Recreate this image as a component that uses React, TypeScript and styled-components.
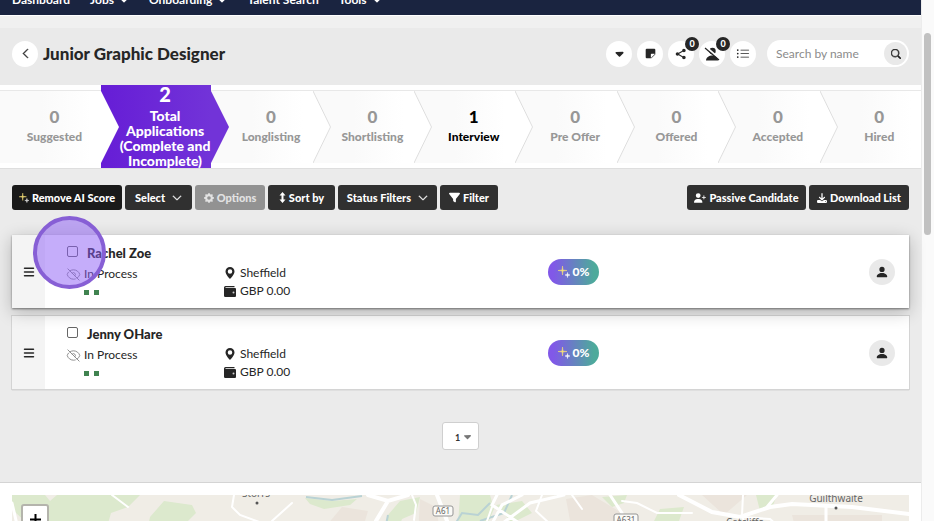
import React from "react";
import styled, { createGlobalStyle, css } from "styled-components";
import {
  BsStickyFill,
  BsListUl,
  BsSearch,
  BsChevronLeft,
  BsChevronDown,
  BsPersonFill,
  BsGeoAltFill,
  BsGearFill,
} from "react-icons/bs";
import { BiSolidShareAlt } from "react-icons/bi";
import { FaBars, FaCaretDown, FaDownload, FaFilter, FaUserPlus } from "react-icons/fa6";
import { HiOutlineEyeSlash } from "react-icons/hi2";

const GlobalStyle = createGlobalStyle`
  * { box-sizing: border-box; }
  body {
    margin: 0;
    background: #ebebeb;
    color: #262626;
    font-family: Lato, "Liberation Sans", sans-serif;
    font-size: 12px;
  }
  button, input, select { font: inherit; color: inherit; }
  svg { display: block; flex: none; }
`;

const Shell = styled.div`
  display: flex;
  height: 100vh;
  overflow: hidden;
`;

const Page = styled.main`
  flex: 1;
  min-width: 0;
`;

const ScrollTrack = styled.div`
  width: 13px;
  background: #fafafa;
  border-left: 1px solid #ececec;
  padding: 33px 3px 0 2px;
`;

const ScrollThumb = styled.div`
  height: 202px;
  border-radius: 4px;
  background: #c1c1c1;
`;

const Nav = styled.nav`
  display: flex;
  align-items: flex-end;
  gap: 20px;
  height: 15px;
  padding: 0 12px 7px;
  overflow: hidden;
  background: #1a2440;
`;

const NavLink = styled.a`
  display: flex;
  align-items: center;
  gap: 5px;
  color: #fff;
  font-size: 12px;
  font-weight: 700;
  line-height: 16px;
  text-decoration: none;
`;

const NavGap = styled.div`
  height: 13px;
  border-top: 1px solid #fff;
  background: #f0f0f0;
`;

const Header = styled.header`
  display: flex;
  align-items: center;
  gap: 5px;
  height: 57px;
  padding: 0 12px 6px;
  background: #eaeaea;
`;

const RoundButton = styled.button<{ $tone?: "grey" }>`
  position: relative;
  display: grid;
  place-items: center;
  width: 26px;
  height: 26px;
  flex: none;
  padding: 0;
  border: 0;
  border-radius: 50%;
  background: ${(p) => (p.$tone === "grey" ? "#e9e9e9" : "#fff")};
`;

const Title = styled.h1`
  margin: 0;
  flex: 1;
  font-size: 17px;
  font-weight: 900;
  line-height: 24px;
`;

const HeaderTools = styled.div`
  display: flex;
  gap: 5px;
  padding-right: 6px;
`;

const CountBadge = styled.span`
  position: absolute;
  top: -4px;
  left: 17px;
  width: 14px;
  height: 14px;
  border-radius: 50%;
  background: #262626;
  color: #fff;
  font-size: 9px;
  font-weight: 900;
  line-height: 14px;
  text-align: center;
`;

const SearchBox = styled.form`
  display: flex;
  align-items: center;
  width: 142px;
  height: 27px;
  padding: 0 2px 0 9px;
  border-radius: 14px;
  background: #fff;
`;

const SearchInput = styled.input`
  flex: 1;
  min-width: 0;
  padding: 0;
  border: 0;
  outline: 0;
  background: none;
  font-size: 12px;
  &::placeholder { color: #8b8b8b; opacity: 1; }
`;

const SearchButton = styled(RoundButton)`
  width: 23px;
  height: 23px;
`;

const Stages = styled.div`
  display: grid;
  grid-template-columns: 202fr 221fr repeat(7, 203fr);
  height: 83px;
  background: #fff;
`;

const Stage = styled.button<{ $tone: "muted" | "strong" | "active" }>`
  display: flex;
  min-width: 0;
  padding: 0;
  border: 0;
  text-align: center;
  color: #979797;
  background: linear-gradient(#fff 5px, #e8e8e8 5px, #e8e8e8 6px, transparent 6px, transparent 78px, #fff 78px),
    linear-gradient(90deg, #fafafa, #fafafa 40%, #fff 90%);
  ${(p) => p.$tone === "strong" && css`color: #000;`}
  ${(p) =>
    p.$tone === "active" &&
    css`
      color: #fff;
      background: linear-gradient(90deg, #661dd6, #7233d8);
    `}
`;

const StageText = styled.span<{ $active: boolean }>`
  display: flex;
  flex: 1;
  min-width: 0;
  flex-direction: column;
  gap: ${(p) => (p.$active ? "5px" : "3px")};
  padding-top: ${(p) => (p.$active ? "0" : "23px")};
`;

const StageCount = styled.span<{ $active: boolean }>`
  font-size: ${(p) => (p.$active ? "20px" : "17px")};
  font-weight: 900;
  line-height: 18px;
`;

const StageLabel = styled.span<{ $active: boolean }>`
  font-size: ${(p) => (p.$active ? "14px" : "12px")};
  font-weight: 900;
  line-height: 15px;
`;

const StageInset = styled.span`
  width: 8px;
`;

const Listing = styled.section`
  padding: 16px 12px 32px;
  border-top: 1px solid #dedede;
  background: #ebebeb;
`;

const Toolbar = styled.div`
  display: flex;
  gap: 3px;
  margin-bottom: 25px;
`;

const ToolButton = styled.button<{ $width: number; $tone?: "dark" | "off" }>`
  display: flex;
  align-items: center;
  justify-content: center;
  gap: 3px;
  width: ${(p) => p.$width}px;
  height: 25px;
  padding: 0;
  border: 0;
  border-radius: 3px;
  background: ${(p) =>
    p.$tone === "dark" ? "#1a1a1a" : p.$tone === "off" ? "#929292" : "#303030"};
  color: ${(p) => (p.$tone === "off" ? "#e2e2e2" : "#fff")};
  font-size: 11px;
  font-weight: 900;
  line-height: 14px;
  white-space: nowrap;
`;

const MenuLabel = styled.span`
  margin-right: 4px;
`;

const Spacer = styled.div`
  flex: 1;
`;

const Cards = styled.ul`
  display: flex;
  flex-direction: column;
  gap: 8px;
  margin: 0;
  padding: 0;
  list-style: none;
`;

const Card = styled.li<{ $raised: boolean }>`
  position: relative;
  z-index: ${(p) => (p.$raised ? 1 : 0)};
  display: grid;
  grid-template-columns: 33px 179fr 324fr 321fr 26px;
  align-items: center;
  height: 73px;
  padding-right: 14px;
  background: #fff;
  box-shadow: ${(p) =>
    p.$raised
      ? "0 1px 2px rgba(0,0,0,.45), 0 4px 16px rgba(0,0,0,.24)"
      : "0 0 0 1px #d4d4d4, 0 1px 1px rgba(0,0,0,.3)"};
`;

const Handle = styled.button`
  display: grid;
  place-items: center;
  align-self: stretch;
  padding: 0;
  border: 0;
  background: #f4f4f4;
`;

const Person = styled.div`
  display: grid;
  grid-template-columns: 14px 1fr;
  column-gap: 4px;
  align-items: center;
  padding-left: 21px;
`;

const Tick = styled.input`
  appearance: none;
  width: 11px;
  height: 11px;
  margin: 0 0 3px 1px;
  border: 1px solid #666;
  border-radius: 2px;
  background: #fff;
`;

const Name = styled.label`
  padding-left: 3px;
  font-size: 13px;
  font-weight: 900;
  line-height: 22px;
`;

const Status = styled.span`
  line-height: 20px;
`;

const Dots = styled.div`
  grid-column: 2;
  display: flex;
  gap: 5px;
  padding: 6px 0 6px;
`;

const Dot = styled.span`
  width: 5px;
  height: 5px;
  background: #408350;
`;

const Facts = styled.div`
  display: grid;
  grid-template-columns: 12px 1fr;
  column-gap: 4px;
  align-items: center;
  justify-items: center;
  padding-top: 21px;
  line-height: 18px;
  & > span { justify-self: start; }
`;

const Score = styled.span`
  display: flex;
  align-items: center;
  justify-content: center;
  gap: 3px;
  width: 51px;
  height: 26px;
  border-radius: 13px;
  background: linear-gradient(90deg, #8158e8 10%, #4daa9b 90%);
  color: #fff;
  font-size: 12px;
  font-weight: 900;
`;

const ClickMarker = styled.div`
  position: absolute;
  top: -19px;
  left: 21px;
  width: 73px;
  height: 73px;
  border: 4px solid #875fd5;
  border-radius: 50%;
  background: rgba(139, 92, 246, 0.5);
  pointer-events: none;
`;

const Pager = styled.div`
  display: flex;
  justify-content: center;
  padding-top: 33px;
`;

const PageSelectBox = styled.div`
  display: flex;
  align-items: center;
  width: 37px;
  height: 28px;
  padding-right: 5px;
  border: 1px solid #cfcfcf;
  border-radius: 3px;
  background: #fff;
  color: #777;
`;

const PageSelect = styled.select`
  appearance: none;
  flex: 1;
  min-width: 0;
  padding: 2px 0 0 12px;
  border: 0;
  background: none;
  color: #333;
  font-size: 9px;
  font-weight: 700;
`;

const MapSection = styled.section`
  padding: 12px 12px 0;
  border-top: 1px solid #d4d4d4;
  background: #fff;
`;

const MapFrame = styled.div`
  position: relative;
  height: 60px;
  overflow: hidden;
`;

const ZoomIn = styled.button`
  position: absolute;
  top: 9px;
  left: 9px;
  display: grid;
  place-items: center;
  width: 28px;
  height: 31px;
  padding: 0;
  border: 2px solid #b4b4ac;
  border-radius: 3px;
  background: #fff;
`;

function Sparkles({ size }: { size: number }) {
  return (
    <svg width={size} height={size} viewBox="0 0 24 24" aria-hidden="true">
      <path d="M9 0L10 8L18 9L10 10L9 18L8 10L0 9L8 8Z" fill="#f5df78" stroke="#f5df78" strokeWidth="1" />
      <path d="M19 13L19.800 17.200L24 18L19.800 18.800L19 23L18.200 18.800L14 18L18.200 17.200Z" fill="#fff" stroke="#fff" strokeWidth="1" />
    </svg>
  );
}

function SortArrow() {
  return (
    <svg width="7" height="11" viewBox="0 0 7 11" aria-hidden="true">
      <path d="M3.500 0L6.500 3.500H4.500V7.500H6.500L3.500 11L0.500 7.500H2.500V3.500H0.500Z" fill="#fff" />
    </svg>
  );
}

function PersonSlash() {
  return (
    <svg width="16" height="14" viewBox="0 0 16 14" aria-hidden="true">
      <circle cx="8.500" cy="4" r="3.200" fill="#262626" />
      <path d="M2 13.500C2 10.500 5 8.500 8.500 8.500S14 10.500 14 13.500Z" fill="#262626" />
      <path d="M2 0L16 12" stroke="#fff" strokeWidth="2" />
      <path d="M1 1L15 13" stroke="#262626" strokeWidth="1.200" />
    </svg>
  );
}

function Wallet() {
  return (
    <svg width="12" height="11" viewBox="0 0 12 11" aria-hidden="true">
      <path d="M1.500 0H10.500V1.200H1.500V2H11A1 1 0 0 1 12 3V10A1 1 0 0 1 11 11H1.200A1.200 1.200 0 0 1 0 9.800V1.500A1.500 1.500 0 0 1 1.500 0Z" fill="#262626" />
      <circle cx="9.500" cy="6.500" r="1" fill="#cfcfcf" />
    </svg>
  );
}

function Chevron({ edge }: { edge: "line" | "notch" | "tip" }) {
  return (
    <svg width="18" height="83" viewBox="0 0 18 83" aria-hidden="true">
      <path d="M0 0V83V78L18 42L0 6Z" fill={edge === "tip" ? "#7233d8" : "#fff"} />
      {edge === "line" && <path d="M0 6L17.500 42L0 78" fill="none" stroke="#dedede" />}
    </svg>
  );
}

function AreaMap() {
  return (
    <svg width="100%" height="60" viewBox="0 0 897 60" preserveAspectRatio="xMidYMin slice" aria-hidden="true">
      <rect width="897" height="60" fill="#f0ede6" />
      <g fill="#dce9cd">
        <path d="M0 0H33L38 6L45 0H128L116 12L99 18L95 32L104 60H48L0 14Z" />
        <path d="M152 6L180 10L184 18L174 28L160 60H130L138 22Z" />
        <path d="M293 3L320 6L345 4L338 10L312 14L298 9ZM388 6L408 2L404 18L390 24L376 60H366L376 20Z" />
        <path d="M448 0H478L482 14L462 60H444ZM484 10L510 6L520 18L500 28ZM590 2L615 0L612 8L600 12ZM744 0H765L760 13L748 16ZM648 14L672 12L667 26H642Z" />
      </g>
      <g fill="#ebe4dc">
        <path d="M330 12L356 16L350 36H310ZM554 4L580 0L610 18L600 36H560ZM690 0H735L712 20ZM780 20H870V60H790ZM408 4L424 12L432 60H405Z" />
      </g>
      <g fill="none" stroke="#b9d2d4" strokeWidth="2">
        <path d="M294 2L320 5L350 1M376 20L368 60M424 60L450 18L466 20L478 8M500 0L492 18L468 26M543 2L552 0" />
      </g>
      <g fill="none" stroke="#fff" strokeLinecap="round">
        <path strokeWidth="4" d="M356 0L376 6L396 0M376 6L364 26L350 60M425 0L432 18L448 60M667 0L700 17L728 22L758 12L780 9L840 12L897 19" />
        <path strokeWidth="3" d="M552 0L518 8L480 36L460 60M598 0L610 18L614 60M476 36L490 10L510 0M485 0L480 10L510 30M755 12L765 0M814 12V60M0 8L12 60" />
        <path strokeWidth="2" d="M222 0L220 12L228 20L250 28M400 0L404 10L402 25M480 12L470 40M610 6L625 8L645 18L680 18M731 0L730 20L736 40M530 0L524 16L537 28M100 0L116 12M280 8L260 26M560 0L570 14M730 22L758 24L765 30" />
      </g>
      <g fill="#555">
        <circle cx="245" cy="8" r="1.500" />
        <circle cx="824" cy="13" r="1.500" />
      </g>
      <g fill="#fbfaf7" stroke="#959595">
        <rect x="421" y="11" width="20" height="10" rx="2" />
        <rect x="602" y="19" width="24" height="11" rx="2" />
      </g>
      <g fill="#666" fontFamily="'Noto Sans', sans-serif" fontSize="8" textAnchor="middle">
        <text x="431" y="19">A61</text>
        <text x="614" y="28">A631</text>
        <text x="244" y="2" fontSize="10">Storrs</text>
        <text x="824" y="7" fontSize="10">Guilthwaite</text>
        <text x="733" y="31" fontSize="10">Catcliffe</text>
      </g>
    </svg>
  );
}

type StageInfo = { count: number; label: string; tone: "muted" | "strong" | "active" };

const stages: StageInfo[] = [
  { count: 0, label: "Suggested", tone: "muted" },
  { count: 2, label: "Total Applications (Complete and Incomplete)", tone: "active" },
  { count: 0, label: "Longlisting", tone: "muted" },
  { count: 0, label: "Shortlisting", tone: "muted" },
  { count: 1, label: "Interview", tone: "strong" },
  { count: 0, label: "Pre Offer", tone: "muted" },
  { count: 0, label: "Offered", tone: "muted" },
  { count: 0, label: "Accepted", tone: "muted" },
  { count: 0, label: "Hired", tone: "muted" },
];

const candidates = [
  { id: "rachel", name: "Rachel Zoe", raised: true },
  { id: "jenny", name: "Jenny OHare", raised: false },
];

const navItems = [
  { label: "Dashboard", menu: false },
  { label: "Jobs", menu: true },
  { label: "Onboarding", menu: true },
  { label: "Talent Search", menu: false },
  { label: "Tools", menu: true },
];

function Candidate({ id, name, raised }: (typeof candidates)[number]) {
  return (
    <Card $raised={raised}>
      <Handle aria-label={`Reorder ${name}`}>
        <FaBars size={12} />
      </Handle>
      <Person>
        <Tick type="checkbox" id={id} />
        <Name htmlFor={id}>{name}</Name>
        <HiOutlineEyeSlash size={15} color="#888" />
        <Status>In Process</Status>
        <Dots>
          <Dot />
          <Dot />
        </Dots>
      </Person>
      <Facts>
        <BsGeoAltFill size={12} />
        <span>Sheffield</span>
        <Wallet />
        <span>GBP 0.00</span>
      </Facts>
      <Score>
        <Sparkles size={12} />
        0%
      </Score>
      <RoundButton $tone="grey" aria-label={`Profile of ${name}`}>
        <BsPersonFill size={14} />
      </RoundButton>
      {raised && <ClickMarker />}
    </Card>
  );
}

export default function App() {
  return (
    <>
      <GlobalStyle />
      <Shell>
        <Page>
          <Nav>
            {navItems.map((item) => (
              <NavLink href="#" key={item.label}>
                {item.label}
                {item.menu && <FaCaretDown size={10} />}
              </NavLink>
            ))}
          </Nav>
          <NavGap />
          <Header>
            <RoundButton aria-label="Back">
              <BsChevronLeft size={11} strokeWidth={1} />
            </RoundButton>
            <Title>Junior Graphic Designer</Title>
            <HeaderTools>
              <RoundButton aria-label="More"><FaCaretDown size={13} /></RoundButton>
              <RoundButton aria-label="Notes"><BsStickyFill size={11} /></RoundButton>
              <RoundButton aria-label="Share">
                <BiSolidShareAlt size={14} />
                <CountBadge>0</CountBadge>
              </RoundButton>
              <RoundButton aria-label="Rejected">
                <PersonSlash />
                <CountBadge>0</CountBadge>
              </RoundButton>
              <RoundButton aria-label="List"><BsListUl size={14} /></RoundButton>
            </HeaderTools>
            <SearchBox>
              <SearchInput placeholder="Search by name" aria-label="Search by name" />
              <SearchButton $tone="grey" type="button" aria-label="Search">
                <BsSearch size={10} strokeWidth={1} />
              </SearchButton>
            </SearchBox>
          </Header>
          <Stages>
            {stages.map((s, i) => {
              const active = s.tone === "active";
              return (
                <Stage key={s.label} $tone={s.tone}>
                  {i === 0 ? <StageInset /> : <Chevron edge={active ? "notch" : i === 2 ? "tip" : "line"} />}
                  <StageText $active={active}>
                    <StageCount $active={active}>{s.count}</StageCount>
                    <StageLabel $active={active}>{s.label}</StageLabel>
                  </StageText>
                </Stage>
              );
            })}
          </Stages>
          <Listing>
            <Toolbar>
              <ToolButton $width={110} $tone="dark"><Sparkles size={10} />Remove AI Score</ToolButton>
              <ToolButton $width={67}><MenuLabel>Select</MenuLabel><BsChevronDown size={10} strokeWidth={1} /></ToolButton>
              <ToolButton $width={70} $tone="off"><BsGearFill size={10} />Options</ToolButton>
              <ToolButton $width={67}><SortArrow />Sort by</ToolButton>
              <ToolButton $width={99}><MenuLabel>Status Filters</MenuLabel><BsChevronDown size={10} strokeWidth={1} /></ToolButton>
              <ToolButton $width={58}><FaFilter size={11} />Filter</ToolButton>
              <Spacer />
              <ToolButton $width={119}><FaUserPlus size={12} />Passive Candidate</ToolButton>
              <ToolButton $width={100}><FaDownload size={10} />Download List</ToolButton>
            </Toolbar>
            <Cards>
              {candidates.map((c) => (
                <Candidate key={c.id} {...c} />
              ))}
            </Cards>
            <Pager>
              <PageSelectBox>
                <PageSelect aria-label="Page"><option>1</option></PageSelect>
                <FaCaretDown size={11} />
              </PageSelectBox>
            </Pager>
          </Listing>
          <MapSection>
            <MapFrame>
              <AreaMap />
              <ZoomIn aria-label="Zoom in">
                <svg width="11" height="11" viewBox="0 0 11 11" aria-hidden="true">
                  <path d="M5.500 0V11M0 5.500H11" stroke="#000" strokeWidth="2" />
                </svg>
              </ZoomIn>
            </MapFrame>
          </MapSection>
        </Page>
        <ScrollTrack>
          <ScrollThumb />
        </ScrollTrack>
      </Shell>
    </>
  );
}
